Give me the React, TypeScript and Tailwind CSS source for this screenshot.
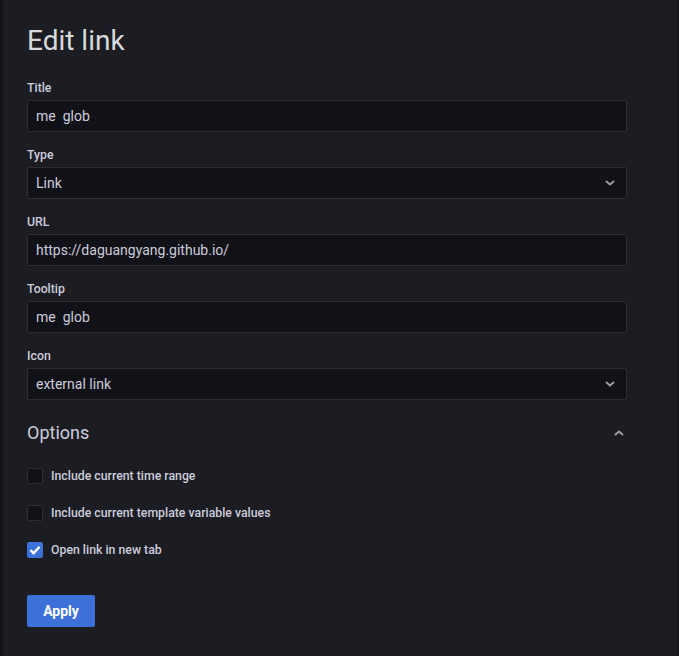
import React from "react";

const font = { fontFamily: "Roboto, 'Liberation Sans', sans-serif" };

function Chevron({ up = false }: { up?: boolean }) {
  return (
    <svg width="10" height="6" viewBox="0 0 10 6" className="text-[#9fa1a7]">
      {up ? (
        <path d="M1 5 L5 1.5 L9 5" fill="none" stroke="currentColor" strokeWidth="1.8" />
      ) : (
        <path d="M1 1 L5 4.5 L9 1" fill="none" stroke="currentColor" strokeWidth="1.8" />
      )}
    </svg>
  );
}

function Field({ label, value, select = false }: { label: string; value: string; select?: boolean }) {
  return (
    <div className="mb-[16px]">
      <div className="text-[12.3px] leading-[15px] font-medium text-[#ccccdc] mb-[4px]">{label}</div>
      <div className="h-[32px] w-[600px] rounded-[2px] border border-[#2c2e33] bg-[#111217] flex items-center pl-[8px] pr-[11px] justify-between">
        <span className="text-[14px] text-[#ccccdc] whitespace-pre">{value}</span>
        {select && <Chevron />}
      </div>
    </div>
  );
}

function Check({ label, checked = false }: { label: string; checked?: boolean }) {
  return (
    <div className="flex items-center h-[16px] mb-[21px]">
      {checked ? (
        <div className="w-[16px] h-[16px] rounded-[2px] bg-[#3d71d9] flex items-center justify-center">
          <svg width="12" height="10" viewBox="0 0 12 10">
            <path d="M1.5 5.2 L4.6 8.2 L10.5 1.8" fill="none" stroke="white" strokeWidth="2.4" />
          </svg>
        </div>
      ) : (
        <div className="w-[16px] h-[16px] rounded-[2px] border border-[#2c2e33] bg-[#111217]" />
      )}
      <span className="ml-[8px] text-[12.3px] font-medium text-[#ccccdc]">{label}</span>
    </div>
  );
}

export default function App() {
  return (
    <div className="flex min-h-[656px] w-[679px] bg-[#1b1d22]" style={font}>
      <div className="w-[3px] bg-[#121316]" />
      <div className="flex-1 pl-[24px] pt-[21px]">
        <h1 className="text-[28px] leading-[40px] font-normal text-[#d8d9da] mb-[20px]">Edit link</h1>
        <Field label="Title" value="me  glob" />
        <Field label="Type" value="Link" select />
        <Field label="URL" value="https://daguangyang.github.io/" />
        <Field label="Tooltip" value="me  glob" />
        <Field label="Icon" value="external link" select />
        <div className="flex items-center justify-between w-[600px] mt-[21px] mb-[23px] pr-[3px]">
          <span className="text-[18px] leading-[24px] text-[#ccccdc]">Options</span>
          <Chevron up />
        </div>
        <Check label="Include current time range" />
        <Check label="Include current template variable values" />
        <Check label="Open link in new tab" checked />
        <button className="mt-[16px] h-[32px] w-[68px] rounded-[2px] bg-[#3d71d9] text-white text-[14px] font-bold">
          Apply
        </button>
      </div>
      <div className="w-[2px] bg-[#15171a]" />
    </div>
  );
}
